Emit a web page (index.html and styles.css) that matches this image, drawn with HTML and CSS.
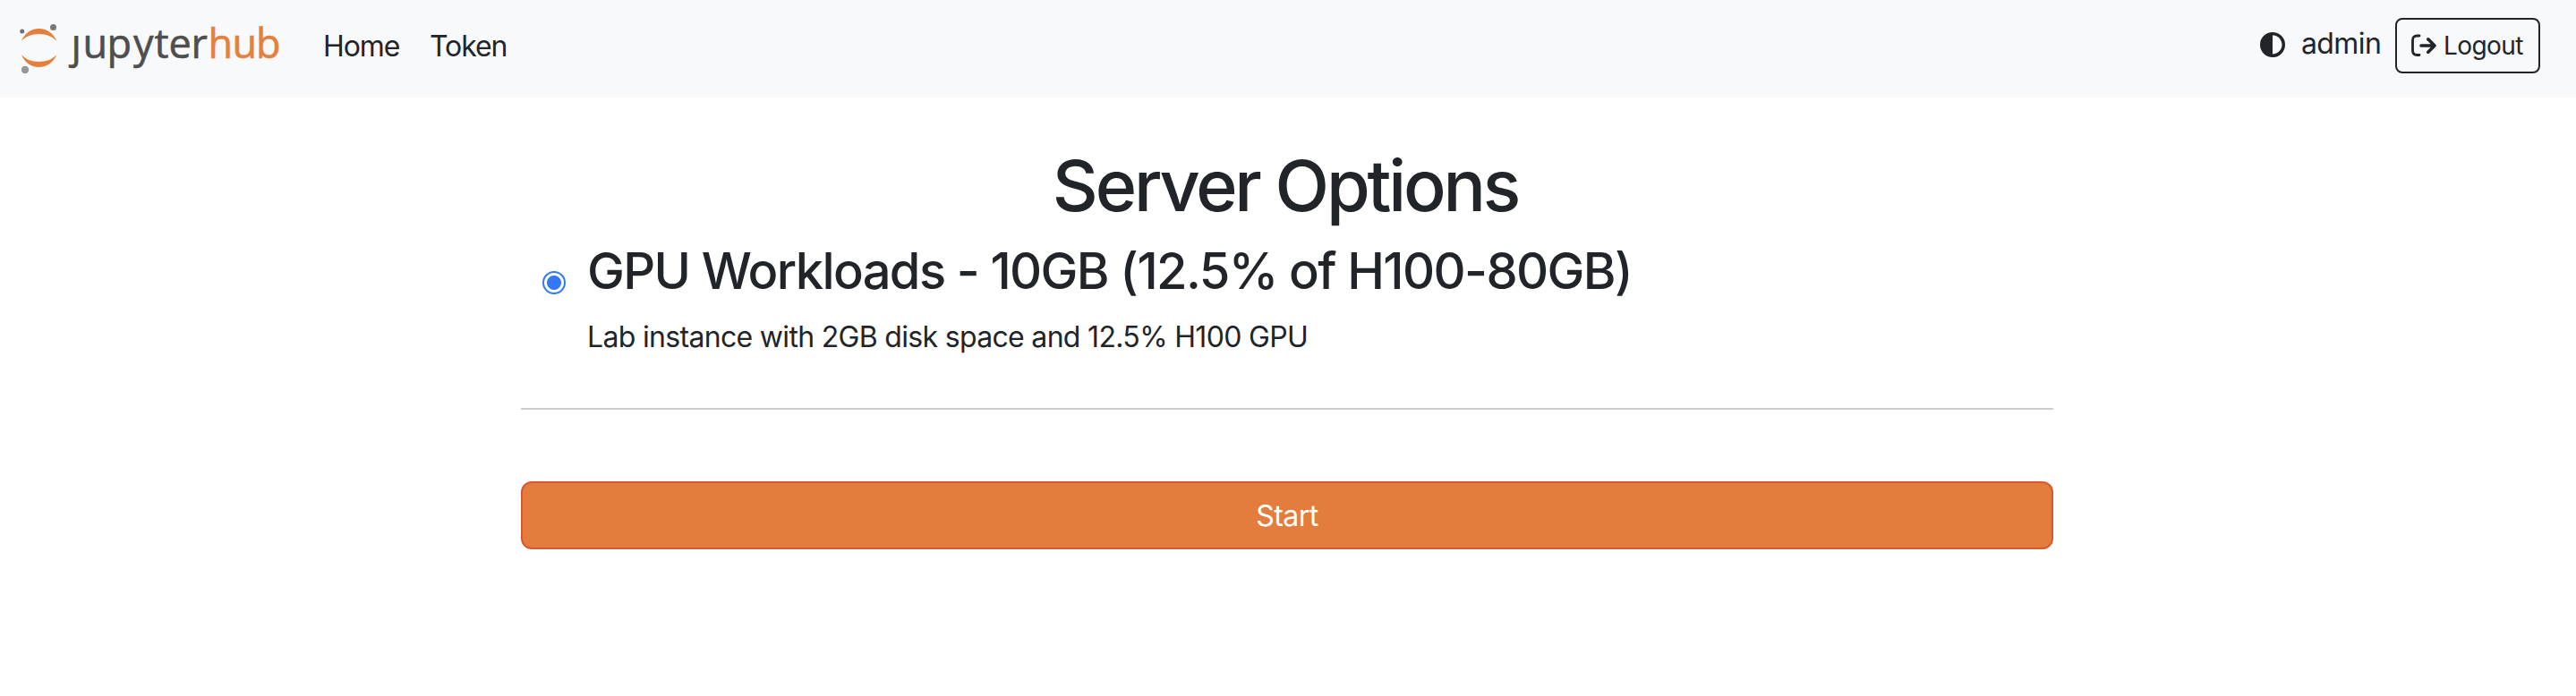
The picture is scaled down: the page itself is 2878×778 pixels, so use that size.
FILE: index.html
```html
<!DOCTYPE html>
<html lang="en">
<head>
<meta charset="utf-8">
<title>JupyterHub</title>
<link rel="stylesheet" href="styles.css">
</head>
<body>
<nav class="navbar">
  <a class="brand" href="#">
    <svg class="logo" viewBox="0 -20 296 100" role="img" aria-label="jupyterhub">
      <defs><clipPath id="stem"><rect x="40" y="20" width="40" height="50"/></clipPath></defs>
      <path fill="#e4803c" d="M2 26C5 18 12 12 21.500 12S38 18 41.500 26C37 21 30 18 21.500 18S6 21 2 26Z"/>
      <path fill="#e4803c" d="M2 41C5 49 12 55 21.500 55S38 49 41.500 41C37 46 30 49 21.500 49S6 46 2 41Z"/>
      <circle cx="2.700" cy="15" r="2.500" fill="#6f7070"/>
      <circle cx="37.500" cy="10.500" r="3.500" fill="#767777"/>
      <circle cx="6" cy="58" r="4.200" fill="#989898"/>
      <g class="wordmark">
        <text clip-path="url(#stem)" x="57.500" y="45">j</text>
        <text x="70.500 97.500 127 150.500 166.500 191.500" y="45">upyter</text>
        <text class="hub" x="210.500 237.500 264" y="45">hub</text>
      </g>
    </svg>
  </a>
  <a class="nav-link home" href="#">Home</a>
  <a class="nav-link token" href="#">Token</a>
  <div class="nav-end">
    <svg class="theme-icon" viewBox="0 0 512 512"><path fill="currentColor" d="M448 256c0-106-86-192-192-192v384c106 0 192-86 192-192zM0 256a256 256 0 1 1 512 0 256 256 0 1 1-512 0z"/></svg>
    <span class="user">admin</span>
    <a class="logout" href="#">
      <svg class="logout-icon" viewBox="0 0 28 28" fill="none" stroke="currentColor" stroke-width="2.800" stroke-linecap="round" stroke-linejoin="round"><path d="M9 3H6.500Q1.500 3 1.500 8V19.500Q1.500 24.500 6.500 24.500H9"/><path stroke-width="3.600" d="M11 14H26M18.800 6.800L26 14L18.800 21.200"/></svg>
      <span class="logout-text">Logout</span>
    </a>
  </div>
</nav>
<main class="container">
  <h1 class="title">Server Options</h1>
  <form class="options">
    <label class="profile">
      <span class="radio"></span>
      <span class="profile-body">
        <span class="profile-name">GPU Workloads - 10GB (12.5% of H100-80GB)</span>
        <span class="profile-desc">Lab instance with 2GB disk space and 12.5% H100 GPU</span>
      </span>
    </label>
    <hr class="divider">
    <button class="start" type="button">Start</button>
  </form>
</main>
</body>
</html>
```
FILE: styles.css
```css
* { box-sizing: border-box; }
body {
  margin: 0;
  background: #fff;
  color: #212529;
  font-family: Inter, "Liberation Sans", sans-serif;
  font-size: 32px;
  line-height: 48px;
}
a { color: inherit; text-decoration: none; }
.navbar {
  display: flex;
  align-items: flex-start;
  height: 109px;
  padding: 0 40px 0 22px;
  background: #f8f9fb;
}
.brand { width: 296px; height: 100px; }
.logo { display: block; width: 296px; height: 100px; }
.wordmark {
  font-family: "Open Sans", sans-serif;
  font-size: 45px;
  fill: #4e4e4e;
  stroke: #4e4e4e;
  stroke-width: 0.6px;
}
.hub { fill: #e4803c; stroke: #e4803c; }
.nav-link { padding-top: 28px; white-space: nowrap; letter-spacing: -1.1px; }
.home { margin-left: 43px; width: 119px; }
.nav-end { display: flex; margin: 20px 0 0 auto; }
.theme-icon { width: 28px; height: 28px; margin: 16px 18px 0 0; }
.user { width: 105px; padding-top: 5px; letter-spacing: -0.6px; }
.logout {
  display: flex;
  width: 162px;
  height: 62px;
  border: 2px solid #212529;
  border-radius: 8px;
  padding: 8px 0 0 16px;
  font-size: 28px;
  line-height: 42px;
  letter-spacing: -0.6px;
}
.logout-icon { width: 28px; height: 28px; margin: 7px 8px 0 0; }
.container { width: 1712px; margin: 49px 0 0 582px; }
.title {
  margin: 0;
  padding: 1px 4px 0 0;
  font-size: 79px;
  font-weight: 500;
  line-height: 96px;
  letter-spacing: -3.2px;
  text-align: center;
}
.options { padding-top: 15px; }
.profile { display: flex; }
.radio {
  flex: none;
  width: 26px;
  height: 26px;
  margin: 33px 24px 0 24px;
  border: 2px solid #3478f6;
  border-radius: 50%;
  background: radial-gradient(circle, #3478f6 7.500px, #fff 8.500px);
}
.profile-body { display: flex; flex-direction: column; gap: 16px; white-space: nowrap; }
.profile-name { font-size: 56px; font-weight: 500; line-height: 67px; letter-spacing: -1.6px; }
.profile-desc { line-height: 48px; letter-spacing: -0.68px; }
.divider { margin: 55px 0 80px; border: 0; height: 2px; background: #ccc; }
.start {
  display: block;
  width: 100%;
  height: 76px;
  padding: 2px 0 0;
  border: 2px solid #d8582f;
  border-radius: 12px;
  background: #e37c3c;
  color: #fff;
  font: inherit;
  letter-spacing: -0.5px;
}
```
